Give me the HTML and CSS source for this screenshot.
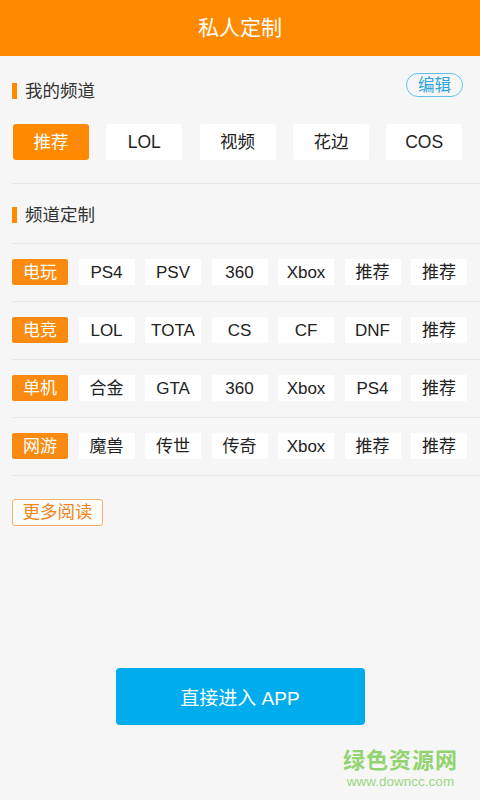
FILE: index.html
```html
<!DOCTYPE html>
<html lang="zh-CN">
<head>
    <meta charset="UTF-8">
    <meta name="viewport" content="width=device-width, initial-scale=1.0">
    <title>私人定制</title>
    <link rel="stylesheet" href="styles.css">
</head>
<body>

    <header class="topbar">私人定制</header>

    <main class="panel">

        <div class="sec-head">
            <h2 class="sec-title">我的频道</h2>
            <button class="edit-btn">编辑</button>
        </div>

        <div class="my-chips">
            <span class="chip active">推荐</span>
            <span class="chip">LOL</span>
            <span class="chip">视频</span>
            <span class="chip">花边</span>
            <span class="chip">COS</span>
        </div>

        <div class="sec-head second">
            <h2 class="sec-title">频道定制</h2>
        </div>

        <div class="cat-list">
            <div class="cat-row">
                <span class="tag head">电玩</span>
                <span class="tag">PS4</span>
                <span class="tag">PSV</span>
                <span class="tag">360</span>
                <span class="tag">Xbox</span>
                <span class="tag">推荐</span>
                <span class="tag">推荐</span>
            </div>
            <div class="cat-row">
                <span class="tag head">电竞</span>
                <span class="tag">LOL</span>
                <span class="tag">TOTA</span>
                <span class="tag">CS</span>
                <span class="tag">CF</span>
                <span class="tag">DNF</span>
                <span class="tag">推荐</span>
            </div>
            <div class="cat-row">
                <span class="tag head">单机</span>
                <span class="tag">合金</span>
                <span class="tag">GTA</span>
                <span class="tag">360</span>
                <span class="tag">Xbox</span>
                <span class="tag">PS4</span>
                <span class="tag">推荐</span>
            </div>
            <div class="cat-row">
                <span class="tag head">网游</span>
                <span class="tag">魔兽</span>
                <span class="tag">传世</span>
                <span class="tag">传奇</span>
                <span class="tag">Xbox</span>
                <span class="tag">推荐</span>
                <span class="tag">推荐</span>
            </div>
        </div>

        <button class="more-btn">更多阅读</button>

        <div class="enter-wrap">
            <button class="enter-btn">直接进入 APP</button>
        </div>
    </main>

    <div class="watermark">
        <div class="wm-name">绿色资源网</div>
        <div class="wm-url">www.downcc.com</div>
    </div>

</body>
</html>
```

FILE: styles.css
```css
*{
    box-sizing: border-box;
}

body{
    margin: 0;
    background-color: #f6f6f6;
    font-family: "Liberation Sans", "Noto Sans CJK SC", sans-serif;
    color: #222;
    height: 800px;
    position: relative;
    overflow: hidden;
}

.topbar{
    height: 56px;
    line-height: 56px;
    background-color: #ff8a00;
    color: #fff;
    text-align: center;
    font-size: 21px;
}

.panel{
    padding-left: 12px;
}

.sec-head{
    display: flex;
    justify-content: space-between;
    align-items: flex-end;
    height: 25px;
    margin-top: 17px;
    padding-right: 17px;
}

.sec-head.second{
    margin-top: 13px;
}

.sec-title{
    margin: 0 0 -1px;
    font-size: 17.5px;
    font-weight: normal;
    line-height: 16px;
    border-left: 5px solid #ff8a00;
    padding-left: 8px;
    color: #333;
}

.edit-btn{
    width: 57px;
    height: 24px;
    border: 1px solid #62c1e8;
    border-radius: 12px;
    background: none;
    color: #2ba6dc;
    font-family: inherit;
    font-size: 16.5px;
    padding: 0;
    line-height: 22px;
    margin-bottom: 1px;
}

.my-chips{
    display: flex;
    gap: 17.3px;
    margin-top: 26px;
    padding-bottom: 23px;
    border-bottom: 1px solid #e6e6e6;
}

.chip{
    width: 76px;
    height: 36px;
    line-height: 36px;
    text-align: center;
    background-color: #fff;
    border-radius: 3px;
    font-size: 17.5px;
}

.chip.active{
    background-color: #ff8a00;
    color: #fff;
    margin-left: 1px;
}

.cat-list{
    margin-top: 21px;
    border-top: 1px solid #e6e6e6;
}

.cat-row{
    display: grid;
    grid-template-columns: repeat(7, 56px);
    column-gap: 10.5px;
    padding: 15px 0 16px;
    border-bottom: 1px solid #e6e6e6;
}

.tag{
    height: 26px;
    line-height: 27px;
    text-align: center;
    background-color: #fff;
    font-size: 17px;
}

.tag.head{
    background-color: #fb8a10;
    color: #fff;
    border-radius: 2px;
}

.more-btn{
    display: block;
    margin-top: 23px;
    width: 91px;
    height: 27px;
    padding: 0;
    border: 1px solid #f2b36a;
    border-radius: 3px;
    background-color: #fcfcfc;
    color: #f08519;
    font-family: inherit;
    font-size: 17.5px;
    line-height: 25px;
}

.enter-wrap{
    display: flex;
    justify-content: center;
    margin-top: 142px;
    margin-left: -12px;
}

.enter-btn{
    width: 249px;
    height: 57px;
    border: none;
    border-radius: 4px;
    background-color: #00adec;
    color: #fff;
    font-family: inherit;
    font-size: 19px;
}

.watermark{
    position: absolute;
    right: 22px;
    bottom: 10px;
    text-align: center;
}

.wm-name{
    font-size: 22px;
    font-weight: bold;
    color: #92d46f;
    letter-spacing: 1px;
    line-height: 26px;
}

.wm-url{
    font-size: 13.5px;
    color: #9dd682;
    line-height: 16px;
}
```
